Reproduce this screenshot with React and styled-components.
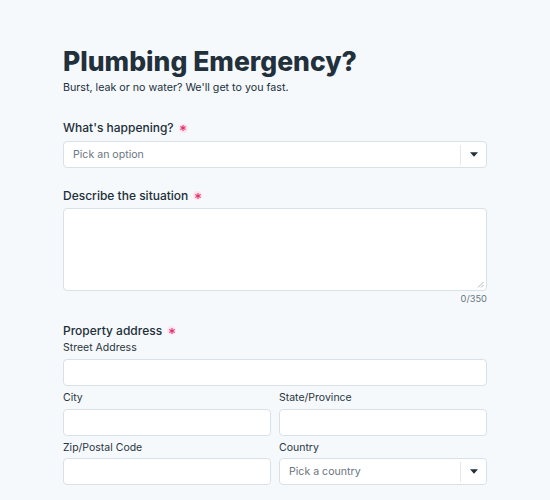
import React from 'react';
import styled, { createGlobalStyle } from 'styled-components';

const GlobalStyle = createGlobalStyle`
    html, body {
        margin: 0;
        padding: 0;
        background: #f5f9fc;
        font-family: Inter, "Noto Sans", sans-serif;
        color: #1f2d38;
    }
    * { box-sizing: border-box; }
`;

const Page = styled.div`
    padding: 45px 63px 0 63px;
    width: 550px;
`;

const Title = styled.h1`
    margin: 0;
    font-size: 26.5px;
    line-height: 32px;
    font-weight: 800;
    color: #22303b;
`;

const Subtitle = styled.p`
    margin: 3.5px 0 0 0;
    font-size: 10.7px;
    line-height: 14px;
    color: #22303b;
`;

const Field = styled.div`
    display: flex;
    flex-direction: column;
    margin-top: ${p => p.$top || 0}px;
`;

const Label = styled.label`
    display: flex;
    align-items: center;
    gap: 5px;
    font-size: 12px;
    line-height: 16px;
    font-weight: 500;
    color: #222e38;
    margin-bottom: ${p => p.$gap ?? 5}px;
`;

const SubLabel = styled.label`
    font-size: 10.5px;
    line-height: 14px;
    color: #2a3540;
    margin-bottom: 3.5px;
`;

const Required = styled.span`
    display: inline-flex;
    align-items: center;
    justify-content: center;
    width: 9px;
    height: 9px;
    border-radius: 50%;
    background: #fde4ed;
`;

const Box = styled.div`
    height: 27px;
    background: #fff;
    border: 1px solid #d9e1e8;
    border-radius: 4px;
    display: flex;
    align-items: center;
`;

const Placeholder = styled.span`
    flex: 1;
    padding-left: 9px;
    font-size: 10.6px;
    color: #6b7680;
`;

const Divider = styled.span`
    width: 1px;
    height: 20px;
    background: #e3e8ed;
`;

const Caret = styled.span`
    width: 25px;
    display: flex;
    justify-content: center;
    align-items: center;
`;

const TextArea = styled.div`
    position: relative;
    height: 83px;
    background: #fff;
    border: 1px solid #d9e1e8;
    border-radius: 4px;
`;

const Grip = styled.svg`
    position: absolute;
    right: 2px;
    bottom: 2px;
`;

const Counter = styled.div`
    text-align: right;
    font-size: 9.3px;
    line-height: 12px;
    color: #6b7680;
    margin-top: 2.4px;
`;

const Row = styled.div`
    display: grid;
    grid-template-columns: 1fr 1fr;
    gap: 8px;
    margin-top: ${p => p.$top || 0}px;
`;

function Star() {
    return (
        <Required aria-label="required">
            <svg width="6" height="6" viewBox="0 0 6 6">
                <path d="M3 0.4 V5.6 M0.75 1.7 L5.25 4.3 M0.75 4.3 L5.25 1.7"
                    stroke="#e3306c" strokeWidth="1.1" strokeLinecap="round" />
            </svg>
        </Required>
    );
}

function Select({ placeholder }) {
    return (
        <Box>
            <Placeholder>{placeholder}</Placeholder>
            <Divider />
            <Caret>
                <svg width="8" height="5" viewBox="0 0 8 5">
                    <path d="M0 0.3 H8 L4 4.7 Z" fill="#22303b" />
                </svg>
            </Caret>
        </Box>
    );
}

function Sub({ label, children }) {
    return (
        <Field>
            <SubLabel>{label}</SubLabel>
            {children || <Box />}
        </Field>
    );
}

export default function App() {
    return (
        <Page>
            <GlobalStyle />
            <Title>Plumbing Emergency?</Title>
            <Subtitle>Burst, leak or no water? We'll get to you fast.</Subtitle>

            <Field $top={25.5}>
                <Label>What's happening? <Star /></Label>
                <Select placeholder="Pick an option" />
            </Field>

            <Field $top={19.6}>
                <Label $gap={4.5}>Describe the situation <Star /></Label>
                <TextArea>
                    <Grip width="7" height="7" viewBox="0 0 7 7">
                        <path d="M1 6.5 L6.5 1 M4 6.5 L6.5 4" stroke="#9aa3ab" strokeWidth="0.8" />
                    </Grip>
                </TextArea>
                <Counter>0/350</Counter>
            </Field>

            <Field $top={17.5}>
                <Label $gap={2.4}>Property address <Star /></Label>
                <Sub label="Street Address" />
            </Field>
            <Row $top={5.2}>
                <Sub label="City" />
                <Sub label="State/Province" />
            </Row>
            <Row $top={5.2}>
                <Sub label="Zip/Postal Code" />
                <Sub label="Country">
                    <Select placeholder="Pick a country" />
                </Sub>
            </Row>
        </Page>
    );
}
